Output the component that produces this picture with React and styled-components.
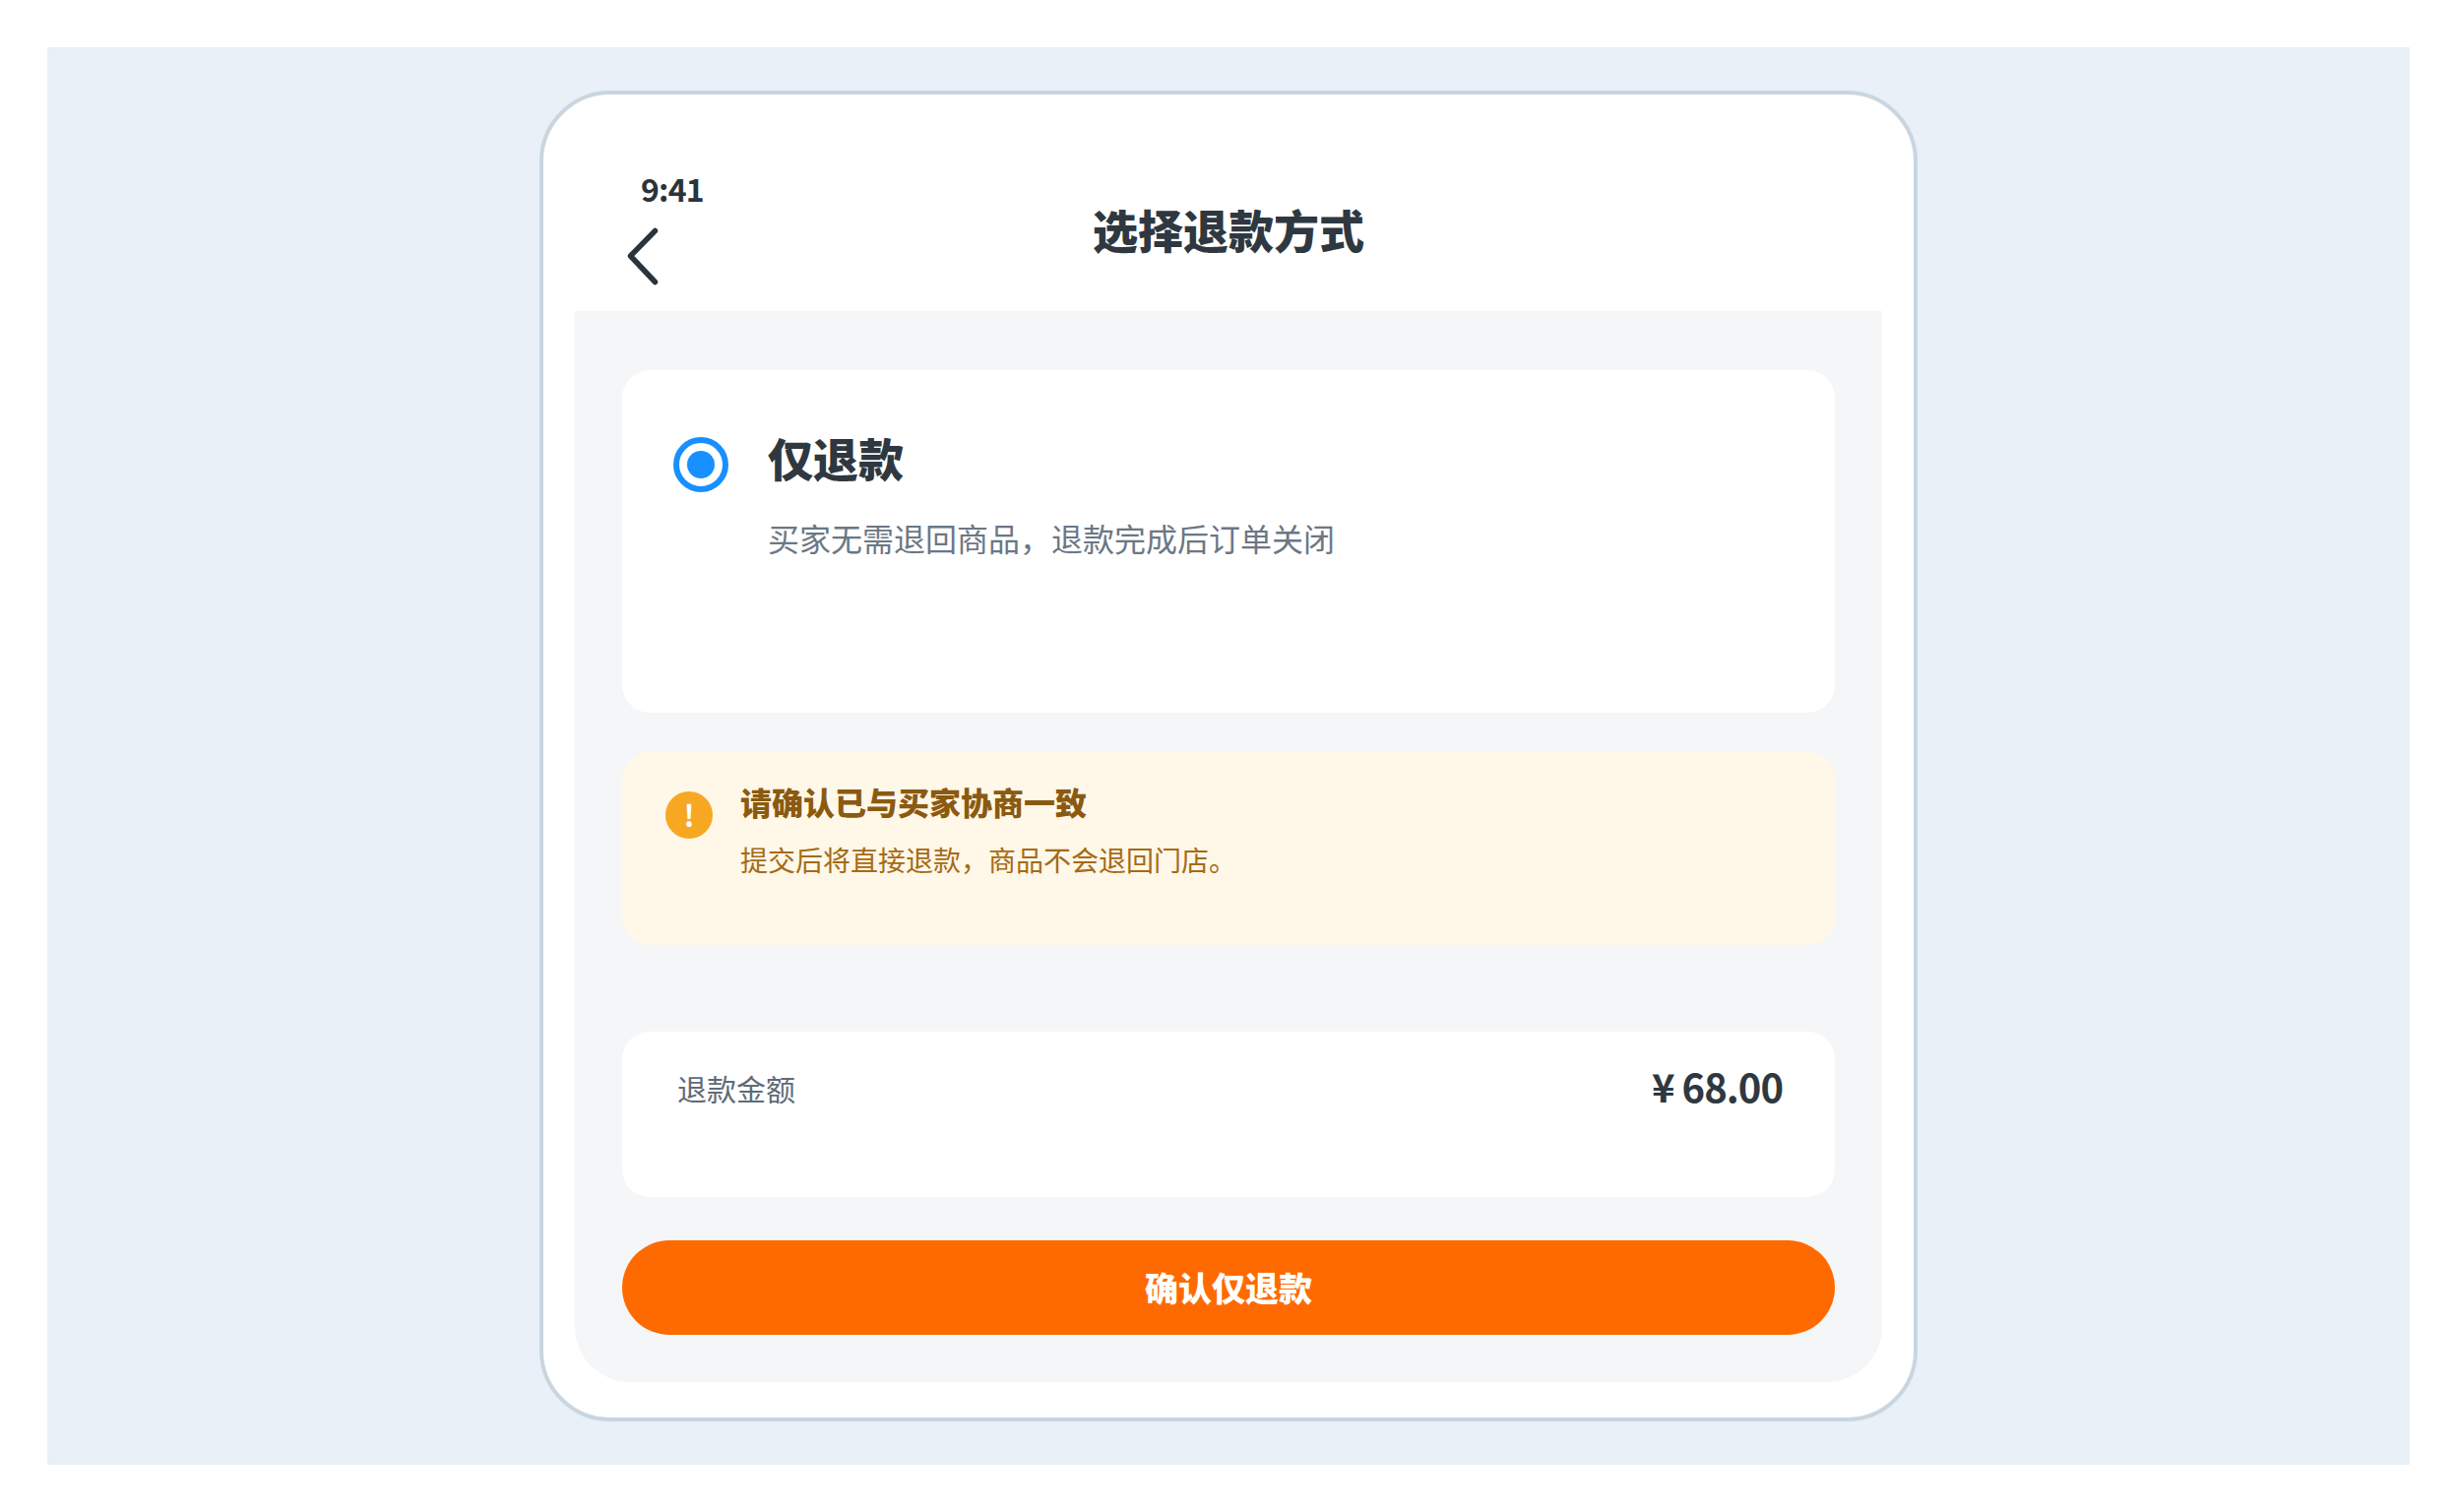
import React from 'react';
import styled, { createGlobalStyle } from 'styled-components';

const Global = createGlobalStyle`
  html, body { margin: 0; padding: 0; background: #fff; }
  body { font-family: "Noto Sans CJK SC", "Noto Sans", sans-serif; }
  * { box-sizing: border-box; }
`;
const Stage = styled.div`
  width: 2496px; height: 1536px; padding: 48px; background: #fff;
`;
const Backdrop = styled.div`
  width: 2400px; height: 1440px; background: #e9f0f7;
  padding-top: 44px; display: flex; justify-content: center; align-items: flex-start;
`;
const Phone = styled.div`
  width: 1400px; height: 1352px; background: #fff; border: 4px solid #c9d6e0; border-radius: 72px;
  padding: 32px 32px 36px; display: flex; flex-direction: column;
`;
const Header = styled.header`
  position: relative; height: 188px; flex: none; display: flex; justify-content: center; padding-top: 70px;
`;
const Time = styled.div`
  position: absolute; left: 67px; top: 40px; font-size: 32px; line-height: 46px; font-weight: 700; letter-spacing: -0.8px; color: #2b333b;
`;
const Back = styled.svg`
  position: absolute; left: 50px; top: 100px; width: 36px; height: 62px;
`;
const Title = styled.h1`
  margin: 0; font-size: 46px; line-height: 68px; font-weight: 800; color: #2f3840;
`;
const Body = styled.main`
  flex: 1; background: #f4f6f8; border-radius: 0 0 56px 56px; padding: 60px 48px 48px;
  display: flex; flex-direction: column;
`;
const OptionCard = styled.section`
  height: 348px; background: #fff; border-radius: 28px; padding: 68px 52px; display: flex; gap: 40px;
`;
const Radio = styled.span`
  flex: none; width: 56px; height: 56px; border-radius: 50%; border: 6px solid #1890ff; display: flex;
  align-items: center; justify-content: center; &::after { content: ""; width: 28px; height: 28px; border-radius: 50%; background: #1890ff; }
`;
const OptionText = styled.div`display: flex; flex-direction: column;`;
const OptionTitle = styled.div`
  font-size: 46px; line-height: 58px; font-weight: 800; color: #2f3840; margin-top: -9px;
`;
const OptionDesc = styled.div`
  font-size: 32px; line-height: 46px; color: #6b7785; margin-top: 30px;
`;
const Notice = styled.section`
  margin-top: 40px; height: 196px; background: #fff7e8; border-radius: 28px; padding: 27px 44px; display: flex; gap: 28px;
`;
const NoticeIcon = styled.span`
  flex: none; width: 48px; height: 48px; margin-top: 13px; border-radius: 50%; background: #f7a823; color: #fff;
  font-size: 30px; font-weight: 700; line-height: 46px; text-align: center;
`;
const NoticeText = styled.div`display: flex; flex-direction: column;`;
const NoticeTitle = styled.div`
  font-size: 32px; line-height: 46px; font-weight: 800; color: #8a5a10;
`;
const NoticeDesc = styled.div`
  font-size: 28px; line-height: 40px; color: #a66a14; margin-top: 16px;
`;
const AmountCard = styled.section`
  margin-top: 88px; height: 168px; background: #fff; border-radius: 28px; padding: 34px 53px 32px 56px; display: flex; justify-content: space-between; align-items: flex-start;
`;
const AmountLabel = styled.div`font-size: 30px; line-height: 44px; color: #5f6b76; margin-top: 1px;`;
const AmountValue = styled.div`font-size: 40px; line-height: 44px; font-weight: 700; letter-spacing: -1px; color: #2f3840; margin-top: -1px;`;
const Submit = styled.button`
  margin-top: 44px; height: 96px; width: 100%; flex: none; border: 0; border-radius: 48px; background: #ff6a00; color: #fff;
  font-family: inherit; font-size: 34px; font-weight: 800; padding: 0 0 2px;
`;

export default function App() {
  return (
    <Stage>
      <Global />
      <Backdrop>
        <Phone>
          <Header>
            <Time>9:41</Time>
            <Back viewBox="0 0 36 62" fill="none" stroke="#2b333b" strokeWidth="5.5" strokeLinecap="round" strokeLinejoin="round">
              <path d="M31.5 6.5 L6.5 32 L31.5 58.5" />
            </Back>
            <Title>选择退款方式</Title>
          </Header>
          <Body>
            <OptionCard>
              <Radio />
              <OptionText>
                <OptionTitle>仅退款</OptionTitle>
                <OptionDesc>买家无需退回商品，退款完成后订单关闭</OptionDesc>
              </OptionText>
            </OptionCard>
            <Notice>
              <NoticeIcon>!</NoticeIcon>
              <NoticeText>
                <NoticeTitle>请确认已与买家协商一致</NoticeTitle>
                <NoticeDesc>提交后将直接退款，商品不会退回门店。</NoticeDesc>
              </NoticeText>
            </Notice>
            <AmountCard>
              <AmountLabel>退款金额</AmountLabel>
              <AmountValue>¥ 68.00</AmountValue>
            </AmountCard>
            <Submit>确认仅退款</Submit>
          </Body>
        </Phone>
      </Backdrop>
    </Stage>
  );
}
